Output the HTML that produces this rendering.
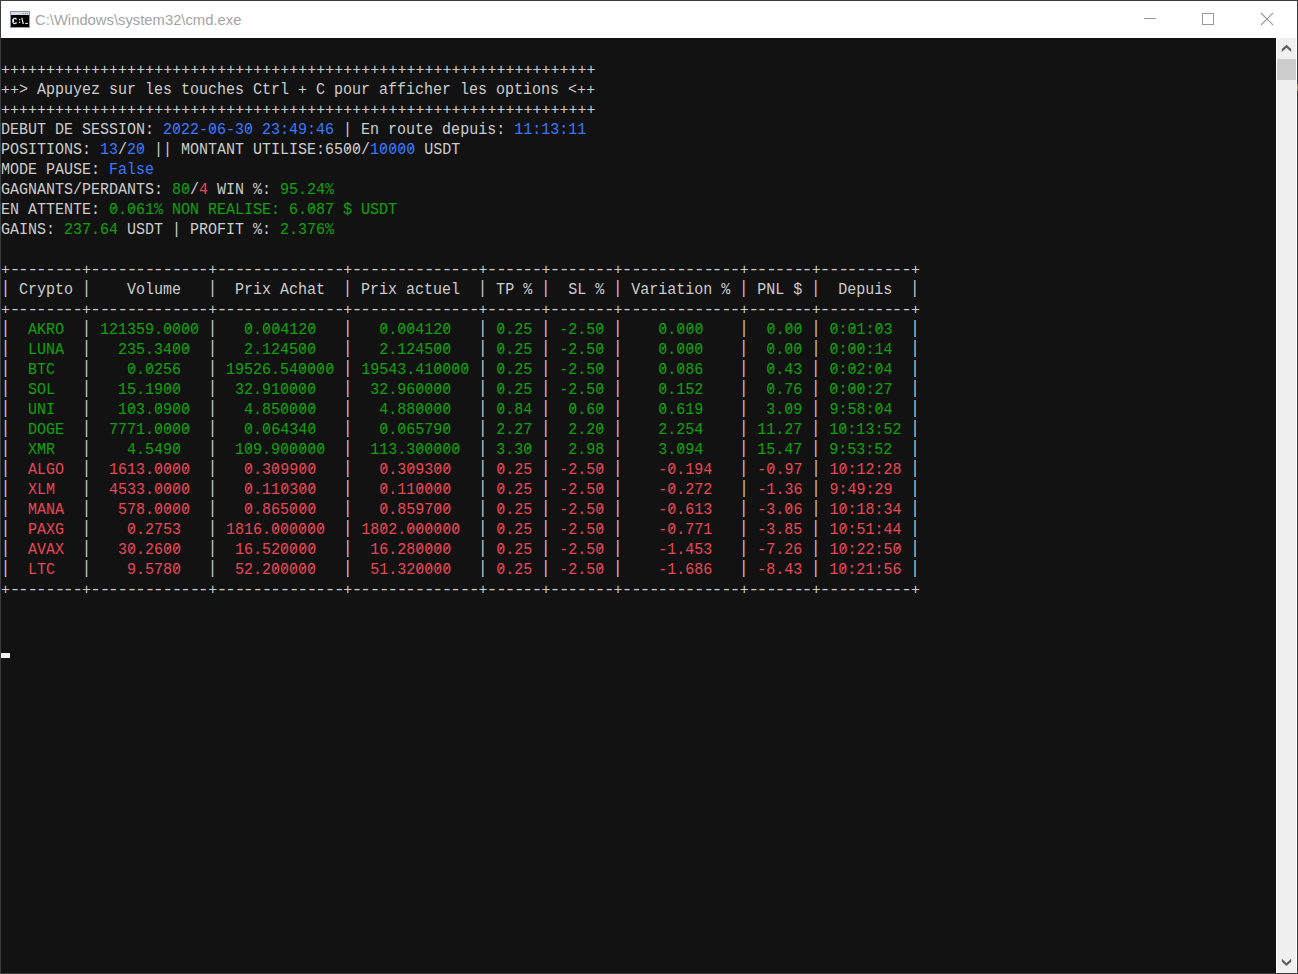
<!DOCTYPE html>
<html><head><meta charset="utf-8"><style>
html,body{margin:0;padding:0;}
body{width:1298px;height:974px;position:relative;overflow:hidden;background:#3c3c3c;}
#win{position:absolute;left:1px;top:1px;width:1296px;height:972px;background:#ffffff;}
#title{position:absolute;left:34px;top:9px;font-family:"Liberation Sans",sans-serif;font-size:14.8px;color:#a4a4a4;white-space:pre;line-height:20px;}
#con{position:absolute;left:1px;top:38px;width:1275px;height:935px;background:#121212;overflow:hidden;}
.l{position:absolute;left:0;height:20px;line-height:20px;white-space:pre;font-family:"Liberation Mono",monospace;font-size:16px;color:#cccccc;transform:scaleX(0.9375);transform-origin:0 0;}
.p{display:inline-block;transform:translateY(-0.6px) scaleY(1.16);transform-origin:50% 15px;}
.pl{display:inline-block;transform:translateY(0.8px) scaleY(0.86);transform-origin:50% 11px;}
.d{display:inline-block;transform:scaleX(1.22);}
.z{position:relative;}
.z::after{content:"";position:absolute;left:4.7px;top:3.9px;width:1.4px;height:7.3px;background:currentColor;transform:rotate(34deg);}
.b{color:#3b78ff} .g{color:#13a10e} .r{color:#e74856}
#cursor{position:absolute;left:0;top:615px;width:9px;height:5px;background:#f2f2f2;}
#sb{position:absolute;left:1277px;top:38px;width:19px;height:935px;background:#f0f0f0;}
#thumb{position:absolute;left:0;top:21px;width:19px;height:21px;background:#cdcdcd;}
</style></head><body>
<div id="win">
 <svg style="position:absolute;left:9px;top:10px" width="20" height="17" viewBox="0 0 20 17" shape-rendering="crispEdges">
  <rect x="0" y="0" width="20" height="17" fill="#8f98a3"/>
  <rect x="1" y="1" width="18" height="3" fill="#d3dae3"/>
  <rect x="13" y="2" width="1" height="1" fill="#7388a8"/><rect x="15" y="2" width="1" height="1" fill="#7388a8"/><rect x="17" y="2" width="1" height="1" fill="#7388a8"/>
  <rect x="1" y="4" width="18" height="12" fill="#000"/>
  <g fill="#e6e6e6" shape-rendering="auto">
   <rect x="2.2" y="8" width="1.8" height="3.8"/>
   <rect x="3.2" y="6.8" width="3.2" height="1.3"/>
   <rect x="3.2" y="11.8" width="3.2" height="1.3"/>
   <rect x="5.6" y="7.6" width="1" height="1.2"/>
   <rect x="5.6" y="11" width="1" height="1.2"/>
   <rect x="8.9" y="8" width="1.3" height="1.2"/>
   <rect x="8.9" y="10.6" width="1.3" height="1.3"/>
   <path d="M11.2 6.8 L12.5 6.8 L13.9 12.9 L12.6 12.9 Z"/>
   <rect x="15.2" y="11.9" width="2.7" height="1.1"/>
  </g>
 </svg>
 <svg style="position:absolute;left:0;top:0" width="1296" height="37" shape-rendering="crispEdges">
  <rect x="1143" y="17" width="12" height="1" fill="#999"/>
  <rect x="1201.5" y="12.5" width="11" height="11" fill="none" stroke="#999" stroke-width="1"/>
  <path d="M1260 12 L1272 24 M1272 12 L1260 24" stroke="#999" stroke-width="1.1" fill="none" shape-rendering="auto"/>
 </svg>
 <div id="title">C:\Windows\system32\cmd.exe</div>
</div>
<div id="con">
<div class="l" style="top:22px"><span class="pl">+</span><span class="pl">+</span><span class="pl">+</span><span class="pl">+</span><span class="pl">+</span><span class="pl">+</span><span class="pl">+</span><span class="pl">+</span><span class="pl">+</span><span class="pl">+</span><span class="pl">+</span><span class="pl">+</span><span class="pl">+</span><span class="pl">+</span><span class="pl">+</span><span class="pl">+</span><span class="pl">+</span><span class="pl">+</span><span class="pl">+</span><span class="pl">+</span><span class="pl">+</span><span class="pl">+</span><span class="pl">+</span><span class="pl">+</span><span class="pl">+</span><span class="pl">+</span><span class="pl">+</span><span class="pl">+</span><span class="pl">+</span><span class="pl">+</span><span class="pl">+</span><span class="pl">+</span><span class="pl">+</span><span class="pl">+</span><span class="pl">+</span><span class="pl">+</span><span class="pl">+</span><span class="pl">+</span><span class="pl">+</span><span class="pl">+</span><span class="pl">+</span><span class="pl">+</span><span class="pl">+</span><span class="pl">+</span><span class="pl">+</span><span class="pl">+</span><span class="pl">+</span><span class="pl">+</span><span class="pl">+</span><span class="pl">+</span><span class="pl">+</span><span class="pl">+</span><span class="pl">+</span><span class="pl">+</span><span class="pl">+</span><span class="pl">+</span><span class="pl">+</span><span class="pl">+</span><span class="pl">+</span><span class="pl">+</span><span class="pl">+</span><span class="pl">+</span><span class="pl">+</span><span class="pl">+</span><span class="pl">+</span><span class="pl">+</span></div>
<div class="l" style="top:42px"><span class="pl">+</span><span class="pl">+</span>&gt; Appuyez sur les touches Ctrl <span class="pl">+</span> C pour afficher les options &lt;<span class="pl">+</span><span class="pl">+</span></div>
<div class="l" style="top:62px"><span class="pl">+</span><span class="pl">+</span><span class="pl">+</span><span class="pl">+</span><span class="pl">+</span><span class="pl">+</span><span class="pl">+</span><span class="pl">+</span><span class="pl">+</span><span class="pl">+</span><span class="pl">+</span><span class="pl">+</span><span class="pl">+</span><span class="pl">+</span><span class="pl">+</span><span class="pl">+</span><span class="pl">+</span><span class="pl">+</span><span class="pl">+</span><span class="pl">+</span><span class="pl">+</span><span class="pl">+</span><span class="pl">+</span><span class="pl">+</span><span class="pl">+</span><span class="pl">+</span><span class="pl">+</span><span class="pl">+</span><span class="pl">+</span><span class="pl">+</span><span class="pl">+</span><span class="pl">+</span><span class="pl">+</span><span class="pl">+</span><span class="pl">+</span><span class="pl">+</span><span class="pl">+</span><span class="pl">+</span><span class="pl">+</span><span class="pl">+</span><span class="pl">+</span><span class="pl">+</span><span class="pl">+</span><span class="pl">+</span><span class="pl">+</span><span class="pl">+</span><span class="pl">+</span><span class="pl">+</span><span class="pl">+</span><span class="pl">+</span><span class="pl">+</span><span class="pl">+</span><span class="pl">+</span><span class="pl">+</span><span class="pl">+</span><span class="pl">+</span><span class="pl">+</span><span class="pl">+</span><span class="pl">+</span><span class="pl">+</span><span class="pl">+</span><span class="pl">+</span><span class="pl">+</span><span class="pl">+</span><span class="pl">+</span><span class="pl">+</span></div>
<div class="l" style="top:82px">DEBUT DE SESSION: <span class="b">2<span class="z">0</span>22-<span class="z">0</span>6-3<span class="z">0</span> 23:49:46</span> | En route depuis: <span class="b">11:13:11</span></div>
<div class="l" style="top:102px">POSITIONS: <span class="b">13</span>/<span class="b">2<span class="z">0</span></span> || MONTANT UTILISE:65<span class="z">0</span><span class="z">0</span>/<span class="b">1<span class="z">0</span><span class="z">0</span><span class="z">0</span><span class="z">0</span></span> USDT</div>
<div class="l" style="top:122px">MODE PAUSE: <span class="b">False</span></div>
<div class="l" style="top:142px">GAGNANTS/PERDANTS: <span class="g">8<span class="z">0</span></span>/<span class="r">4</span> WIN %: <span class="g">95.24%</span></div>
<div class="l" style="top:162px">EN ATTENTE: <span class="g"><span class="z">0</span>.<span class="z">0</span>61% NON REALISE: 6.<span class="z">0</span>87 $ USDT</span></div>
<div class="l" style="top:182px">GAINS: <span class="g">237.64</span> USDT | PROFIT %: <span class="g">2.376%</span></div>
<div class="l" style="top:222px"><span class="pl">+</span><span class="d">-</span><span class="d">-</span><span class="d">-</span><span class="d">-</span><span class="d">-</span><span class="d">-</span><span class="d">-</span><span class="d">-</span><span class="pl">+</span><span class="d">-</span><span class="d">-</span><span class="d">-</span><span class="d">-</span><span class="d">-</span><span class="d">-</span><span class="d">-</span><span class="d">-</span><span class="d">-</span><span class="d">-</span><span class="d">-</span><span class="d">-</span><span class="d">-</span><span class="pl">+</span><span class="d">-</span><span class="d">-</span><span class="d">-</span><span class="d">-</span><span class="d">-</span><span class="d">-</span><span class="d">-</span><span class="d">-</span><span class="d">-</span><span class="d">-</span><span class="d">-</span><span class="d">-</span><span class="d">-</span><span class="d">-</span><span class="pl">+</span><span class="d">-</span><span class="d">-</span><span class="d">-</span><span class="d">-</span><span class="d">-</span><span class="d">-</span><span class="d">-</span><span class="d">-</span><span class="d">-</span><span class="d">-</span><span class="d">-</span><span class="d">-</span><span class="d">-</span><span class="d">-</span><span class="pl">+</span><span class="d">-</span><span class="d">-</span><span class="d">-</span><span class="d">-</span><span class="d">-</span><span class="d">-</span><span class="pl">+</span><span class="d">-</span><span class="d">-</span><span class="d">-</span><span class="d">-</span><span class="d">-</span><span class="d">-</span><span class="d">-</span><span class="pl">+</span><span class="d">-</span><span class="d">-</span><span class="d">-</span><span class="d">-</span><span class="d">-</span><span class="d">-</span><span class="d">-</span><span class="d">-</span><span class="d">-</span><span class="d">-</span><span class="d">-</span><span class="d">-</span><span class="d">-</span><span class="pl">+</span><span class="d">-</span><span class="d">-</span><span class="d">-</span><span class="d">-</span><span class="d">-</span><span class="d">-</span><span class="d">-</span><span class="pl">+</span><span class="d">-</span><span class="d">-</span><span class="d">-</span><span class="d">-</span><span class="d">-</span><span class="d">-</span><span class="d">-</span><span class="d">-</span><span class="d">-</span><span class="d">-</span><span class="pl">+</span></div>
<div class="l" style="top:242px"><span class="p">|</span> Crypto <span class="p">|</span>    Volume   <span class="p">|</span>  Prix Achat  <span class="p">|</span> Prix actuel  <span class="p">|</span> TP % <span class="p">|</span>  SL % <span class="p">|</span> Variation % <span class="p">|</span> PNL $ <span class="p">|</span>  Depuis  <span class="p">|</span></div>
<div class="l" style="top:262px"><span class="pl">+</span><span class="d">-</span><span class="d">-</span><span class="d">-</span><span class="d">-</span><span class="d">-</span><span class="d">-</span><span class="d">-</span><span class="d">-</span><span class="pl">+</span><span class="d">-</span><span class="d">-</span><span class="d">-</span><span class="d">-</span><span class="d">-</span><span class="d">-</span><span class="d">-</span><span class="d">-</span><span class="d">-</span><span class="d">-</span><span class="d">-</span><span class="d">-</span><span class="d">-</span><span class="pl">+</span><span class="d">-</span><span class="d">-</span><span class="d">-</span><span class="d">-</span><span class="d">-</span><span class="d">-</span><span class="d">-</span><span class="d">-</span><span class="d">-</span><span class="d">-</span><span class="d">-</span><span class="d">-</span><span class="d">-</span><span class="d">-</span><span class="pl">+</span><span class="d">-</span><span class="d">-</span><span class="d">-</span><span class="d">-</span><span class="d">-</span><span class="d">-</span><span class="d">-</span><span class="d">-</span><span class="d">-</span><span class="d">-</span><span class="d">-</span><span class="d">-</span><span class="d">-</span><span class="d">-</span><span class="pl">+</span><span class="d">-</span><span class="d">-</span><span class="d">-</span><span class="d">-</span><span class="d">-</span><span class="d">-</span><span class="pl">+</span><span class="d">-</span><span class="d">-</span><span class="d">-</span><span class="d">-</span><span class="d">-</span><span class="d">-</span><span class="d">-</span><span class="pl">+</span><span class="d">-</span><span class="d">-</span><span class="d">-</span><span class="d">-</span><span class="d">-</span><span class="d">-</span><span class="d">-</span><span class="d">-</span><span class="d">-</span><span class="d">-</span><span class="d">-</span><span class="d">-</span><span class="d">-</span><span class="pl">+</span><span class="d">-</span><span class="d">-</span><span class="d">-</span><span class="d">-</span><span class="d">-</span><span class="d">-</span><span class="d">-</span><span class="pl">+</span><span class="d">-</span><span class="d">-</span><span class="d">-</span><span class="d">-</span><span class="d">-</span><span class="d">-</span><span class="d">-</span><span class="d">-</span><span class="d">-</span><span class="d">-</span><span class="pl">+</span></div>
<div class="l" style="top:282px"><span class="p">|</span><span class="g">  AKRO  </span><span class="p">|</span><span class="g"> 121359.<span class="z">0</span><span class="z">0</span><span class="z">0</span><span class="z">0</span> </span><span class="p">|</span><span class="g">   <span class="z">0</span>.<span class="z">0</span><span class="z">0</span>412<span class="z">0</span>   </span><span class="p">|</span><span class="g">   <span class="z">0</span>.<span class="z">0</span><span class="z">0</span>412<span class="z">0</span>   </span><span class="p">|</span><span class="g"> <span class="z">0</span>.25 </span><span class="p">|</span><span class="g"> -2.5<span class="z">0</span> </span><span class="p">|</span><span class="g">    <span class="z">0</span>.<span class="z">0</span><span class="z">0</span><span class="z">0</span>    </span><span class="p">|</span><span class="g">  <span class="z">0</span>.<span class="z">0</span><span class="z">0</span> </span><span class="p">|</span><span class="g"> <span class="z">0</span>:<span class="z">0</span>1:<span class="z">0</span>3  </span><span class="p">|</span></div>
<div class="l" style="top:302px"><span class="p">|</span><span class="g">  LUNA  </span><span class="p">|</span><span class="g">   235.34<span class="z">0</span><span class="z">0</span>  </span><span class="p">|</span><span class="g">   2.1245<span class="z">0</span><span class="z">0</span>   </span><span class="p">|</span><span class="g">   2.1245<span class="z">0</span><span class="z">0</span>   </span><span class="p">|</span><span class="g"> <span class="z">0</span>.25 </span><span class="p">|</span><span class="g"> -2.5<span class="z">0</span> </span><span class="p">|</span><span class="g">    <span class="z">0</span>.<span class="z">0</span><span class="z">0</span><span class="z">0</span>    </span><span class="p">|</span><span class="g">  <span class="z">0</span>.<span class="z">0</span><span class="z">0</span> </span><span class="p">|</span><span class="g"> <span class="z">0</span>:<span class="z">0</span><span class="z">0</span>:14  </span><span class="p">|</span></div>
<div class="l" style="top:322px"><span class="p">|</span><span class="g">  BTC   </span><span class="p">|</span><span class="g">    <span class="z">0</span>.<span class="z">0</span>256   </span><span class="p">|</span><span class="g"> 19526.54<span class="z">0</span><span class="z">0</span><span class="z">0</span><span class="z">0</span> </span><span class="p">|</span><span class="g"> 19543.41<span class="z">0</span><span class="z">0</span><span class="z">0</span><span class="z">0</span> </span><span class="p">|</span><span class="g"> <span class="z">0</span>.25 </span><span class="p">|</span><span class="g"> -2.5<span class="z">0</span> </span><span class="p">|</span><span class="g">    <span class="z">0</span>.<span class="z">0</span>86    </span><span class="p">|</span><span class="g">  <span class="z">0</span>.43 </span><span class="p">|</span><span class="g"> <span class="z">0</span>:<span class="z">0</span>2:<span class="z">0</span>4  </span><span class="p">|</span></div>
<div class="l" style="top:342px"><span class="p">|</span><span class="g">  SOL   </span><span class="p">|</span><span class="g">   15.19<span class="z">0</span><span class="z">0</span>   </span><span class="p">|</span><span class="g">  32.91<span class="z">0</span><span class="z">0</span><span class="z">0</span><span class="z">0</span>   </span><span class="p">|</span><span class="g">  32.96<span class="z">0</span><span class="z">0</span><span class="z">0</span><span class="z">0</span>   </span><span class="p">|</span><span class="g"> <span class="z">0</span>.25 </span><span class="p">|</span><span class="g"> -2.5<span class="z">0</span> </span><span class="p">|</span><span class="g">    <span class="z">0</span>.152    </span><span class="p">|</span><span class="g">  <span class="z">0</span>.76 </span><span class="p">|</span><span class="g"> <span class="z">0</span>:<span class="z">0</span><span class="z">0</span>:27  </span><span class="p">|</span></div>
<div class="l" style="top:362px"><span class="p">|</span><span class="g">  UNI   </span><span class="p">|</span><span class="g">   1<span class="z">0</span>3.<span class="z">0</span>9<span class="z">0</span><span class="z">0</span>  </span><span class="p">|</span><span class="g">   4.85<span class="z">0</span><span class="z">0</span><span class="z">0</span><span class="z">0</span>   </span><span class="p">|</span><span class="g">   4.88<span class="z">0</span><span class="z">0</span><span class="z">0</span><span class="z">0</span>   </span><span class="p">|</span><span class="g"> <span class="z">0</span>.84 </span><span class="p">|</span><span class="g">  <span class="z">0</span>.6<span class="z">0</span> </span><span class="p">|</span><span class="g">    <span class="z">0</span>.619    </span><span class="p">|</span><span class="g">  3.<span class="z">0</span>9 </span><span class="p">|</span><span class="g"> 9:58:<span class="z">0</span>4  </span><span class="p">|</span></div>
<div class="l" style="top:382px"><span class="p">|</span><span class="g">  DOGE  </span><span class="p">|</span><span class="g">  7771.<span class="z">0</span><span class="z">0</span><span class="z">0</span><span class="z">0</span>  </span><span class="p">|</span><span class="g">   <span class="z">0</span>.<span class="z">0</span>6434<span class="z">0</span>   </span><span class="p">|</span><span class="g">   <span class="z">0</span>.<span class="z">0</span>6579<span class="z">0</span>   </span><span class="p">|</span><span class="g"> 2.27 </span><span class="p">|</span><span class="g">  2.2<span class="z">0</span> </span><span class="p">|</span><span class="g">    2.254    </span><span class="p">|</span><span class="g"> 11.27 </span><span class="p">|</span><span class="g"> 1<span class="z">0</span>:13:52 </span><span class="p">|</span></div>
<div class="l" style="top:402px"><span class="p">|</span><span class="g">  XMR   </span><span class="p">|</span><span class="g">    4.549<span class="z">0</span>   </span><span class="p">|</span><span class="g">  1<span class="z">0</span>9.9<span class="z">0</span><span class="z">0</span><span class="z">0</span><span class="z">0</span><span class="z">0</span>  </span><span class="p">|</span><span class="g">  113.3<span class="z">0</span><span class="z">0</span><span class="z">0</span><span class="z">0</span><span class="z">0</span>  </span><span class="p">|</span><span class="g"> 3.3<span class="z">0</span> </span><span class="p">|</span><span class="g">  2.98 </span><span class="p">|</span><span class="g">    3.<span class="z">0</span>94    </span><span class="p">|</span><span class="g"> 15.47 </span><span class="p">|</span><span class="g"> 9:53:52  </span><span class="p">|</span></div>
<div class="l" style="top:422px"><span class="p">|</span><span class="r">  ALGO  </span><span class="p">|</span><span class="r">  1613.<span class="z">0</span><span class="z">0</span><span class="z">0</span><span class="z">0</span>  </span><span class="p">|</span><span class="r">   <span class="z">0</span>.3<span class="z">0</span>99<span class="z">0</span><span class="z">0</span>   </span><span class="p">|</span><span class="r">   <span class="z">0</span>.3<span class="z">0</span>93<span class="z">0</span><span class="z">0</span>   </span><span class="p">|</span><span class="r"> <span class="z">0</span>.25 </span><span class="p">|</span><span class="r"> -2.5<span class="z">0</span> </span><span class="p">|</span><span class="r">    -<span class="z">0</span>.194   </span><span class="p">|</span><span class="r"> -<span class="z">0</span>.97 </span><span class="p">|</span><span class="r"> 1<span class="z">0</span>:12:28 </span><span class="p">|</span></div>
<div class="l" style="top:442px"><span class="p">|</span><span class="r">  XLM   </span><span class="p">|</span><span class="r">  4533.<span class="z">0</span><span class="z">0</span><span class="z">0</span><span class="z">0</span>  </span><span class="p">|</span><span class="r">   <span class="z">0</span>.11<span class="z">0</span>3<span class="z">0</span><span class="z">0</span>   </span><span class="p">|</span><span class="r">   <span class="z">0</span>.11<span class="z">0</span><span class="z">0</span><span class="z">0</span><span class="z">0</span>   </span><span class="p">|</span><span class="r"> <span class="z">0</span>.25 </span><span class="p">|</span><span class="r"> -2.5<span class="z">0</span> </span><span class="p">|</span><span class="r">    -<span class="z">0</span>.272   </span><span class="p">|</span><span class="r"> -1.36 </span><span class="p">|</span><span class="r"> 9:49:29  </span><span class="p">|</span></div>
<div class="l" style="top:462px"><span class="p">|</span><span class="r">  MANA  </span><span class="p">|</span><span class="r">   578.<span class="z">0</span><span class="z">0</span><span class="z">0</span><span class="z">0</span>  </span><span class="p">|</span><span class="r">   <span class="z">0</span>.865<span class="z">0</span><span class="z">0</span><span class="z">0</span>   </span><span class="p">|</span><span class="r">   <span class="z">0</span>.8597<span class="z">0</span><span class="z">0</span>   </span><span class="p">|</span><span class="r"> <span class="z">0</span>.25 </span><span class="p">|</span><span class="r"> -2.5<span class="z">0</span> </span><span class="p">|</span><span class="r">    -<span class="z">0</span>.613   </span><span class="p">|</span><span class="r"> -3.<span class="z">0</span>6 </span><span class="p">|</span><span class="r"> 1<span class="z">0</span>:18:34 </span><span class="p">|</span></div>
<div class="l" style="top:482px"><span class="p">|</span><span class="r">  PAXG  </span><span class="p">|</span><span class="r">    <span class="z">0</span>.2753   </span><span class="p">|</span><span class="r"> 1816.<span class="z">0</span><span class="z">0</span><span class="z">0</span><span class="z">0</span><span class="z">0</span><span class="z">0</span>  </span><span class="p">|</span><span class="r"> 18<span class="z">0</span>2.<span class="z">0</span><span class="z">0</span><span class="z">0</span><span class="z">0</span><span class="z">0</span><span class="z">0</span>  </span><span class="p">|</span><span class="r"> <span class="z">0</span>.25 </span><span class="p">|</span><span class="r"> -2.5<span class="z">0</span> </span><span class="p">|</span><span class="r">    -<span class="z">0</span>.771   </span><span class="p">|</span><span class="r"> -3.85 </span><span class="p">|</span><span class="r"> 1<span class="z">0</span>:51:44 </span><span class="p">|</span></div>
<div class="l" style="top:502px"><span class="p">|</span><span class="r">  AVAX  </span><span class="p">|</span><span class="r">   3<span class="z">0</span>.26<span class="z">0</span><span class="z">0</span>   </span><span class="p">|</span><span class="r">  16.52<span class="z">0</span><span class="z">0</span><span class="z">0</span><span class="z">0</span>   </span><span class="p">|</span><span class="r">  16.28<span class="z">0</span><span class="z">0</span><span class="z">0</span><span class="z">0</span>   </span><span class="p">|</span><span class="r"> <span class="z">0</span>.25 </span><span class="p">|</span><span class="r"> -2.5<span class="z">0</span> </span><span class="p">|</span><span class="r">    -1.453   </span><span class="p">|</span><span class="r"> -7.26 </span><span class="p">|</span><span class="r"> 1<span class="z">0</span>:22:5<span class="z">0</span> </span><span class="p">|</span></div>
<div class="l" style="top:522px"><span class="p">|</span><span class="r">  LTC   </span><span class="p">|</span><span class="r">    9.578<span class="z">0</span>   </span><span class="p">|</span><span class="r">  52.2<span class="z">0</span><span class="z">0</span><span class="z">0</span><span class="z">0</span><span class="z">0</span>   </span><span class="p">|</span><span class="r">  51.32<span class="z">0</span><span class="z">0</span><span class="z">0</span><span class="z">0</span>   </span><span class="p">|</span><span class="r"> <span class="z">0</span>.25 </span><span class="p">|</span><span class="r"> -2.5<span class="z">0</span> </span><span class="p">|</span><span class="r">    -1.686   </span><span class="p">|</span><span class="r"> -8.43 </span><span class="p">|</span><span class="r"> 1<span class="z">0</span>:21:56 </span><span class="p">|</span></div>
<div class="l" style="top:542px"><span class="pl">+</span><span class="d">-</span><span class="d">-</span><span class="d">-</span><span class="d">-</span><span class="d">-</span><span class="d">-</span><span class="d">-</span><span class="d">-</span><span class="pl">+</span><span class="d">-</span><span class="d">-</span><span class="d">-</span><span class="d">-</span><span class="d">-</span><span class="d">-</span><span class="d">-</span><span class="d">-</span><span class="d">-</span><span class="d">-</span><span class="d">-</span><span class="d">-</span><span class="d">-</span><span class="pl">+</span><span class="d">-</span><span class="d">-</span><span class="d">-</span><span class="d">-</span><span class="d">-</span><span class="d">-</span><span class="d">-</span><span class="d">-</span><span class="d">-</span><span class="d">-</span><span class="d">-</span><span class="d">-</span><span class="d">-</span><span class="d">-</span><span class="pl">+</span><span class="d">-</span><span class="d">-</span><span class="d">-</span><span class="d">-</span><span class="d">-</span><span class="d">-</span><span class="d">-</span><span class="d">-</span><span class="d">-</span><span class="d">-</span><span class="d">-</span><span class="d">-</span><span class="d">-</span><span class="d">-</span><span class="pl">+</span><span class="d">-</span><span class="d">-</span><span class="d">-</span><span class="d">-</span><span class="d">-</span><span class="d">-</span><span class="pl">+</span><span class="d">-</span><span class="d">-</span><span class="d">-</span><span class="d">-</span><span class="d">-</span><span class="d">-</span><span class="d">-</span><span class="pl">+</span><span class="d">-</span><span class="d">-</span><span class="d">-</span><span class="d">-</span><span class="d">-</span><span class="d">-</span><span class="d">-</span><span class="d">-</span><span class="d">-</span><span class="d">-</span><span class="d">-</span><span class="d">-</span><span class="d">-</span><span class="pl">+</span><span class="d">-</span><span class="d">-</span><span class="d">-</span><span class="d">-</span><span class="d">-</span><span class="d">-</span><span class="d">-</span><span class="pl">+</span><span class="d">-</span><span class="d">-</span><span class="d">-</span><span class="d">-</span><span class="d">-</span><span class="d">-</span><span class="d">-</span><span class="d">-</span><span class="d">-</span><span class="d">-</span><span class="pl">+</span></div>
<div id="cursor"></div>
</div>
<div style="position:absolute;left:1297px;top:84px;width:1px;height:7px;background:#8f8f2e"></div>
<div id="sb"><div id="thumb"></div>
 <svg style="position:absolute;left:0;top:0" width="20" height="935">
  <path d="M4.8 11 L9.5 6.8 L14.2 11 L14.2 13.9 L9.5 9.7 L4.8 13.9 Z" fill="#606060"/>
  <path d="M4.8 923.7 L9.5 927.9 L14.2 923.7 L14.2 920.8 L9.5 925 L4.8 920.8 Z" fill="#606060"/>
 </svg></div>
</body></html>
